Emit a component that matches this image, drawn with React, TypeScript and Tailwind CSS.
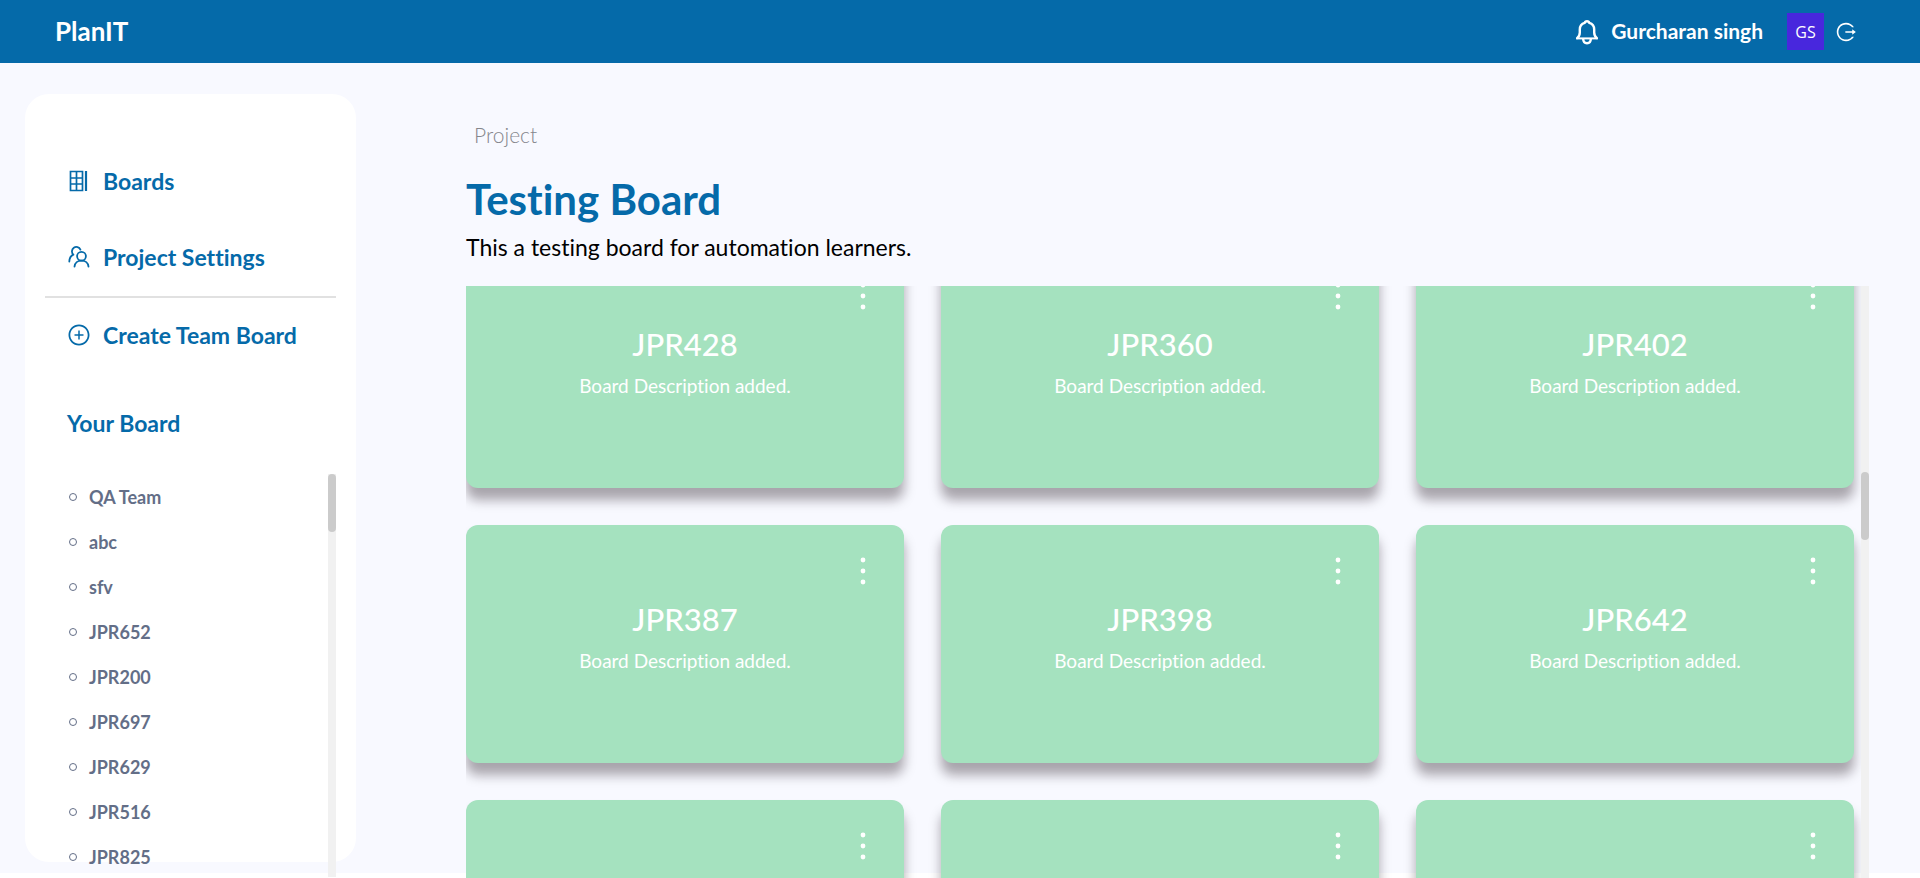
import React from "react";
import { AiOutlineLogout, AiOutlinePlusCircle } from "react-icons/ai";

const teamBoards = ["QA Team", "abc", "sfv", "JPR652", "JPR200", "JPR697", "JPR629", "JPR516", "JPR825"];

const boards = ["JPR428", "JPR360", "JPR402", "JPR387", "JPR398", "JPR642", "", "", ""];

function BellIcon() {
  return (
    <svg viewBox="0 0 24 26" className="h-[26px] w-6" fill="none" stroke="currentColor" strokeWidth="2.4" strokeLinejoin="round" aria-hidden="true">
      <path d="M2 19.5C4 17.8 4.8 16 4.8 13.5V10.5C4.8 6.8 7.2 4.6 9.7 3.9C10.2 1.6 13.8 1.6 14.3 3.9C16.8 4.6 19.2 6.8 19.2 10.5V13.5C19.2 16 20 17.8 22 19.5" />
      <path d="M1 19.4H23" strokeWidth="2" />
      <path d="M8.2 20C8.3 25.6 15.7 25.6 15.8 20" />
    </svg>
  );
}

function BoardsIcon() {
  return (
    <svg viewBox="0 0 24 24" className="size-6" fill="none" stroke="currentColor" strokeWidth="1.7" aria-hidden="true">
      <path d="M3.5 2.5H15.5V21.5H3.5ZM9.5 2.5V21.5M3.5 9H15.5M3.5 15H15.5" />
      <path d="M19 2V22" strokeWidth="2.2" />
    </svg>
  );
}

function PeopleIcon() {
  return (
    <svg viewBox="0 0 24 24" className="size-6" fill="none" stroke="currentColor" strokeWidth="1.8" strokeLinecap="round" aria-hidden="true">
      <circle cx="14.5" cy="11.2" r="4.4" />
      <path d="M7.5 21.6C7.8 17.8 10.8 15.6 14.5 15.6S21.2 17.8 21.5 21.6" />
      <path d="M13.4 4.6A4.4 4.4 0 1 0 6.4 9.6M6.4 9.6C4 10.6 2.4 13 2.3 16.5" />
    </svg>
  );
}

function DotsIcon() {
  return (
    <svg viewBox="0 0 6 28" className="h-7 w-1.5" fill="currentColor" aria-hidden="true">
      <circle cx="3" cy="3" r="2.4" />
      <circle cx="3" cy="14" r="2.4" />
      <circle cx="3" cy="25" r="2.4" />
    </svg>
  );
}

function BoardCard({ name }: { name: string }) {
  return (
    <article className="relative h-[238px] rounded-xl bg-[#a5e2bf] pt-[78px] text-center text-white shadow-[0_12px_12px_rgba(20,10,16,0.35)]">
      <button type="button" aria-label="Board options" className="absolute top-8 right-[38px]">
        <DotsIcon />
      </button>
      <h2 className="text-[31px] leading-8 font-medium">{name}</h2>
      {name && <p className="mt-3 text-[19px] leading-7">Board Description added.</p>}
    </article>
  );
}

export default function App() {
  return (
    <div className="flex h-screen flex-col overflow-hidden bg-white font-['Lato','Open_Sans',sans-serif] [font-variant-ligatures:none]">
      <header className="flex h-[63px] shrink-0 items-center bg-[#056aa9] pr-[63px] pl-[55px] text-white">
        <a href="#" className="pb-0.5 text-[26px] leading-8 font-bold">PlanIT</a>
        <div className="ml-auto flex items-center">
          <button type="button" aria-label="Notifications"><BellIcon /></button>
          <span className="ml-3 pb-0.5 text-[21px] leading-8 font-bold">Gurcharan singh</span>
          <span className="ml-6 grid size-[37px] place-items-center bg-[#4827dd] font-['Open_Sans'] text-base">GS</span>
          <button type="button" aria-label="Log out" className="ml-[11px]"><AiOutlineLogout className="size-[22px]" /></button>
        </div>
      </header>

      <div className="mb-[5px] flex min-h-0 flex-1 bg-[#f8f9ff] pl-[25px]">
        <aside className="mt-[31px] mb-[11px] flex w-[331px] shrink-0 flex-col rounded-3xl bg-white px-5 text-[#056aa9]">
          <nav className="flex flex-col text-[23px] leading-8 font-bold">
            <a href="#" className="mt-[71px] flex items-center gap-3 pl-[22px]"><BoardsIcon />Boards</a>
            <a href="#" className="mt-11 flex items-center gap-3 pl-[22px]"><PeopleIcon />Project Settings</a>
            <hr className="mt-[23px] border-t-2 border-[#e1e1e1]" />
            <button type="button" className="mt-[21px] flex items-center gap-3 pl-[22px]">
              <AiOutlinePlusCircle className="size-6" />Create Team Board
            </button>
          </nav>
          <h2 className="mt-14 pl-[22px] text-[23px] leading-8 font-bold">Your Board</h2>
          <div className="mt-[35px] -mb-[15px] flex min-h-0 flex-1 overflow-hidden">
            <ul className="flex flex-1 flex-col pl-6 text-lg font-bold text-[#636e87]">
              {teamBoards.map((board) => (
                <li key={board} className="flex h-[45px] shrink-0 items-center gap-3">
                  <span className="size-2 rounded-full border border-current" />
                  <a href="#">{board}</a>
                </li>
              ))}
            </ul>
            <div className="w-2 bg-[#f1f1f1]"><div className="h-[58px] rounded bg-[#cbcbcb]" /></div>
          </div>
        </aside>

        <main className="mr-[51px] -mb-[5px] ml-[110px] flex min-w-0 flex-1 flex-col">
          <a href="#" className="mt-[58px] ml-2 text-[21px] leading-7 font-light text-[#85868c]">Project</a>
          <h1 className="mt-[26px] text-[42px] leading-[48px] font-bold text-[#056aa9]">Testing Board</h1>
          <p className="mt-2 text-[23px] leading-8">This a testing board for automation learners.</p>
          <div className="mt-[23px] flex min-h-0 flex-1 overflow-hidden">
            <div className="flex-1 overflow-hidden pr-[7px]">
              <section className="-mt-9 grid grid-cols-3 gap-[37px]">
                {boards.map((name, index) => <BoardCard key={index} name={name} />)}
              </section>
            </div>
            <div className="w-2 bg-[#f1f1f1] pt-[186px]"><div className="h-[68px] rounded bg-[#cbcbcb]" /></div>
          </div>
        </main>
      </div>
    </div>
  );
}
